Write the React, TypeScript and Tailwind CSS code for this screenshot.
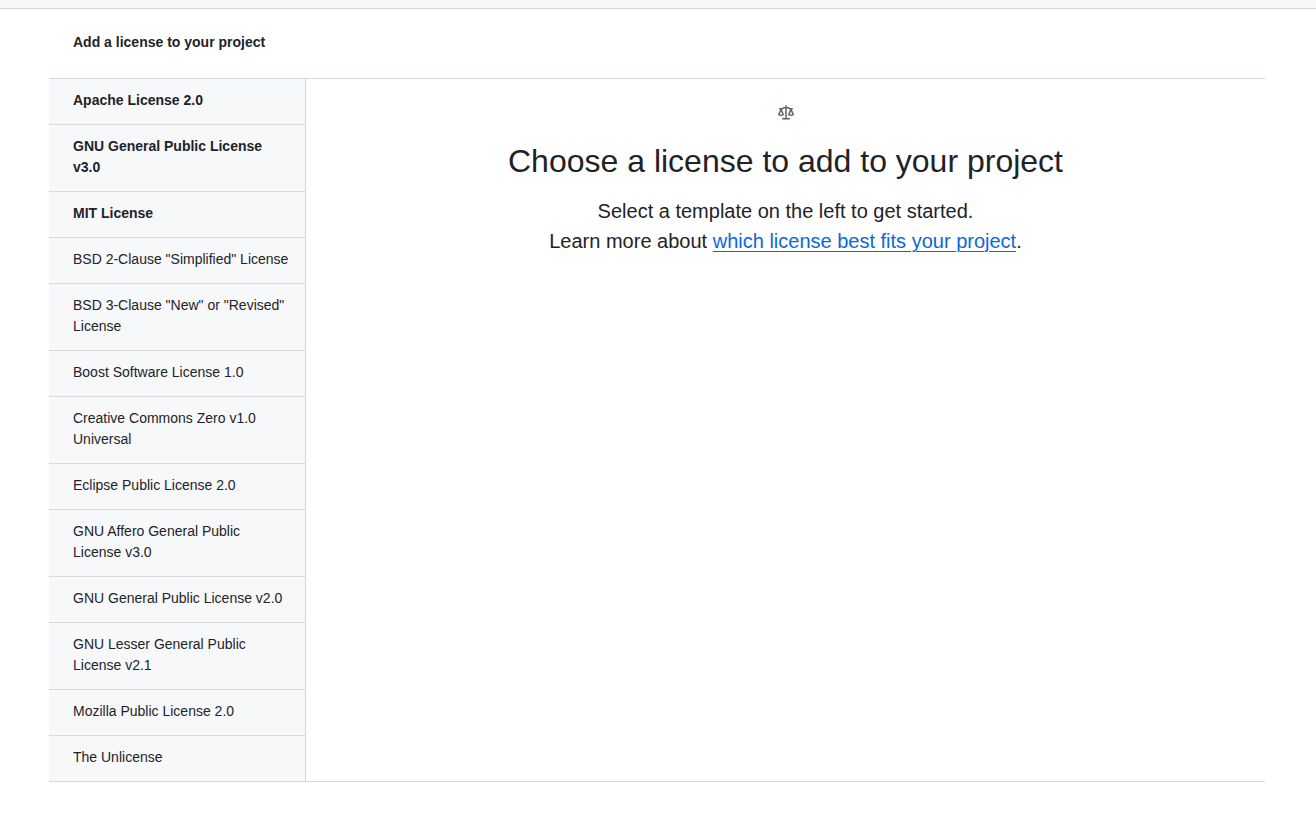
const licenses = [
  { name: "Apache License 2.0", featured: true },
  { name: "GNU General Public License v3.0", featured: true },
  { name: "MIT License", featured: true },
  { name: 'BSD 2-Clause "Simplified" License', featured: false },
  { name: 'BSD 3-Clause "New" or "Revised" License', featured: false },
  { name: "Boost Software License 1.0", featured: false },
  { name: "Creative Commons Zero v1.0 Universal", featured: false },
  { name: "Eclipse Public License 2.0", featured: false },
  { name: "GNU Affero General Public License v3.0", featured: false },
  { name: "GNU General Public License v2.0", featured: false },
  { name: "GNU Lesser General Public License v2.1", featured: false },
  { name: "Mozilla Public License 2.0", featured: false },
  { name: "The Unlicense", featured: false },
];

function ScalesIcon() {
  return (
    <svg
      viewBox="0 0 16 16"
      aria-hidden="true"
      className="mx-auto h-4 w-4 fill-[#59636e]"
    >
      <path d="M8.75.75V2h.985c.304 0 .603.08.867.231l1.29.736c.038.022.08.033.124.033h2.234a.75.75 0 0 1 0 1.5h-.427l2.111 4.692a.75.75 0 0 1-.154.838l-.53-.53.529.531-.001.002-.002.002-.006.006-.006.005-.01.01-.045.04c-.21.176-.441.327-.686.45C14.556 10.78 13.88 11 13 11a4.498 4.498 0 0 1-2.023-.454 3.544 3.544 0 0 1-.686-.45l-.045-.04-.016-.015-.006-.006-.004-.004v-.001a.75.75 0 0 1-.154-.838L12.178 4.5h-.162c-.305 0-.604-.079-.868-.231l-1.29-.736a.245.245 0 0 0-.124-.033H8.75V13h2.5a.75.75 0 0 1 0 1.5h-6.5a.75.75 0 0 1 0-1.5h2.5V3.5h-.984a.245.245 0 0 0-.124.033l-1.289.737c-.265.15-.564.23-.869.23h-.162l2.112 4.692a.75.75 0 0 1-.154.838l-.53-.53.529.531-.001.002-.002.002-.006.006-.016.015-.045.04c-.21.176-.441.327-.686.45C4.556 10.78 3.88 11 3 11a4.498 4.498 0 0 1-2.023-.454 3.544 3.544 0 0 1-.686-.45l-.045-.04-.016-.015-.006-.006-.004-.004v-.001a.75.75 0 0 1-.154-.838L2.178 4.5H1.75a.75.75 0 0 1 0-1.5h2.234a.249.249 0 0 0 .125-.033l1.288-.737c.265-.15.564-.23.869-.23h.984V.75a.75.75 0 0 1 1.5 0Zm2.945 8.477c.285.135.718.273 1.305.273s1.02-.138 1.305-.273L13 6.327Zm-10 0c.285.135.718.273 1.305.273s1.02-.138 1.305-.273L3 6.327Z" />
    </svg>
  );
}

function LicenseMenu() {
  return (
    <nav
      aria-label="License templates"
      className="w-[257px] shrink-0 border-r border-[#d1d5da] bg-[#f6f8fa]"
    >
      <ul className="divide-y divide-[#d8dbdf]">
        {licenses.map((license) => (
          <li key={license.name}>
            <button
              type="button"
              className={`block w-full cursor-pointer pt-[11px] pr-4 pb-[13px] pl-6 text-left text-sm leading-[21px] ${
                license.featured ? "font-bold" : "font-normal"
              }`}
            >
              {license.name}
            </button>
          </li>
        ))}
      </ul>
    </nav>
  );
}

export default function App() {
  return (
    <div className="min-h-screen bg-white font-['Liberation_Sans',Arial,sans-serif] text-[#1f2328]">
      <header className="h-[9px] border-b border-[#d1d9e0] bg-[#f6f8fa]" />
      <main className="mr-[51px] ml-[49px]">
        <h1 className="px-6 pt-[23px] pb-[25px] text-sm leading-[21px] font-bold">
          Add a license to your project
        </h1>
        <div className="flex border-y border-[#d1d9e0]">
          <LicenseMenu />
          <section className="flex-1 px-6 pt-[26px] pb-6 text-center">
            <ScalesIcon />
            <h2 className="mt-4 text-[32px] leading-[48px]">
              Choose a license to add to your project
            </h2>
            <p className="mt-[11px] text-xl leading-[30px]">
              Select a template on the left to get started.
              <br />
              Learn more about{" "}
              <a
                href="#choose"
                className="text-[#0969da] underline decoration-1 underline-offset-[3px]"
              >
                which license best fits your project
              </a>
              .
            </p>
          </section>
        </div>
      </main>
    </div>
  );
}
